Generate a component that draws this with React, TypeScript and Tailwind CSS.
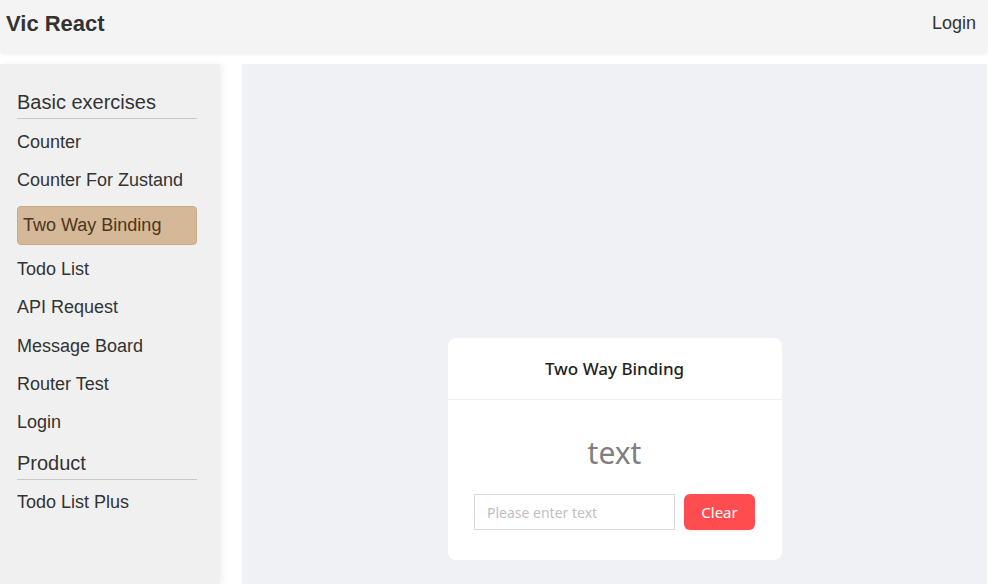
import { useState } from "react";

const basicItems = [
    "Counter",
    "Counter For Zustand",
    "Two Way Binding",
    "Todo List",
    "API Request",
    "Message Board",
    "Router Test",
    "Login",
];

const productItems = ["Todo List Plus"];

function NavItem({ label, active }: { label: string; active?: boolean }) {
    if (active) {
        return (
            <div className="mt-[6px] mb-[6px] h-[39px] flex items-center px-[5px] rounded-[4px] border border-[#c9aa86] bg-[#d5b897] text-[#4b3620]">
                {label}
            </div>
        );
    }
    return <div className="h-[38.25px] flex items-center">{label}</div>;
}

function Section({ title, items, className }: { title: string; items: string[]; className: string }) {
    return (
        <div className={className}>
            <h2 className="text-[20px] leading-[28px] pb-[2px] border-b border-[#c8c8c8]">{title}</h2>
            <div className="mt-[4px] flex flex-col">
                {items.map((item) => (
                    <NavItem key={item} label={item} active={item === "Two Way Binding"} />
                ))}
            </div>
        </div>
    );
}

export default function App() {
    const [value, setValue] = useState("");

    return (
        <div className="w-[988px] h-[584px] overflow-hidden bg-white font-['Liberation_Sans',Arial,sans-serif] text-[#333]">
            <header className="h-[52px] bg-[#f4f4f4] shadow-[0_2px_4px_rgba(0,0,0,0.07)] flex items-center justify-between pl-[6px] pr-[12px] pb-[6px] relative z-10">
                <h1 className="text-[22px] font-bold text-[#333]">Vic React</h1>
                <span className="text-[18px] text-[#333]">Login</span>
            </header>
            <div className="mt-[12px] flex h-[520px]">
                <aside className="w-[220px] bg-[#f0f0f0] shadow-[3px_0_5px_rgba(0,0,0,0.05)] px-[17px] text-[18px] text-[#333] pr-[23px]">
                    <Section title="Basic exercises" items={basicItems} className="pt-[24px]" />
                    <Section title="Product" items={productItems} className="mt-[7px]" />
                </aside>
                <main className="ml-[22px] w-[745px] bg-[#f0f1f4] flex justify-center pt-[274px]">
                    <div className="w-[334px] h-[222px] bg-white rounded-[8px] font-['Noto_Sans',sans-serif]">
                        <div className="h-[62px] flex items-center justify-center border-b border-[#f0f0f0] text-[17px] font-medium text-[#1f1f1f]">
                            Two Way Binding
                        </div>
                        <div className="flex flex-col items-center pt-[33px]">
                            <div className="text-[30px] leading-[40px] text-[#808080]">{value || "text"}</div>
                            <div className="mt-[21px] flex gap-[9px]">
                                <input
                                    value={value}
                                    onChange={(e) => setValue(e.target.value)}
                                    placeholder="Please enter text"
                                    className="w-[201px] h-[36px] border border-[#d9d9d9] px-[12px] text-[14px] text-[#333] placeholder:text-[#bfbfbf] outline-none"
                                />
                                <button
                                    onClick={() => setValue("")}
                                    className="w-[71px] h-[36px] rounded-[6px] bg-[#ff4d4f] text-white text-[15px] shadow-[0_2px_0_rgba(255,38,5,0.06)]"
                                >
                                    Clear
                                </button>
                            </div>
                        </div>
                    </div>
                </main>
            </div>
        </div>
    );
}
